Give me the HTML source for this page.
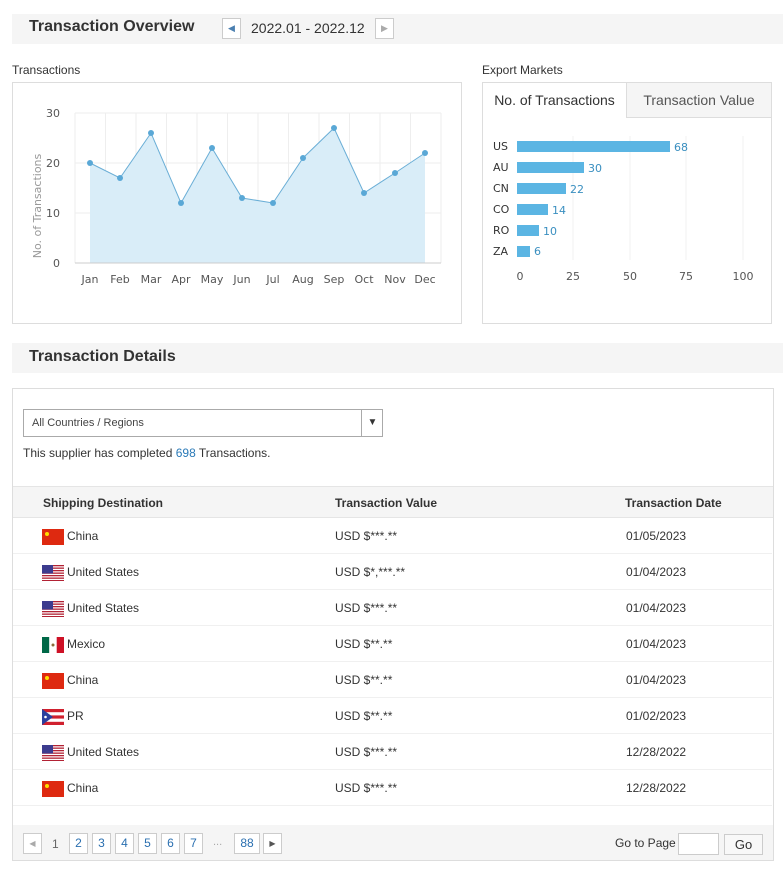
<!DOCTYPE html><html><head><meta charset="utf-8"><style>
*{margin:0;padding:0;box-sizing:border-box}
body{width:783px;height:870px;background:#fff;font-family:"Liberation Sans",sans-serif;color:#333;position:relative;overflow:hidden}
.a{position:absolute}
.bar{background:#f5f5f5}
.h{font-weight:bold;font-size:16px;color:#333}
.btn{position:absolute;border:1px solid #ccc;background:#fff;font-size:12px;color:#2a6fb0;text-align:center;line-height:19px;width:19px;height:21px}
.row{position:absolute;left:13px;width:759px;height:36px;border-bottom:1px solid #f0f0f0;font-size:12px;color:#333}
.row span{position:absolute;top:11px}
.flag{position:absolute;left:29px;top:11px;width:22px;height:16px}
</style></head><body>
<div class="a bar" style="left:12px;top:14px;width:771px;height:30px"></div>
<div class="a h" style="left:29px;top:18px">Transaction Overview</div>
<div class="btn" style="left:222px;top:18px;height:21px;color:#4a7fb0;font-size:9px">◀</div>
<div class="a" style="left:251px;top:20px;font-size:14px;color:#333">2022.01 - 2022.12</div>
<div class="btn" style="left:375px;top:18px;color:#aaa;font-size:9px">▶</div>

<div class="a" style="left:12px;top:63px;font-size:12px">Transactions</div>
<div class="a" style="left:12px;top:82px;width:450px;height:242px;border:1px solid #ddd"></div>
<svg class="a" style="left:0;top:0" width="470" height="330" font-family="DejaVu Sans,sans-serif">
<g stroke="#eee" stroke-width="1">
<line x1="75" y1="113" x2="441" y2="113"/><line x1="75" y1="163" x2="441" y2="163"/><line x1="75" y1="213" x2="441" y2="213"/>
<line x1="75" y1="113" x2="75" y2="263"/><line x1="105.5" y1="113" x2="105.5" y2="263"/><line x1="136" y1="113" x2="136" y2="263"/><line x1="166.5" y1="113" x2="166.5" y2="263"/><line x1="197" y1="113" x2="197" y2="263"/><line x1="227.5" y1="113" x2="227.5" y2="263"/><line x1="258" y1="113" x2="258" y2="263"/><line x1="288.5" y1="113" x2="288.5" y2="263"/><line x1="319" y1="113" x2="319" y2="263"/><line x1="349.5" y1="113" x2="349.5" y2="263"/><line x1="380" y1="113" x2="380" y2="263"/><line x1="410.5" y1="113" x2="410.5" y2="263"/><line x1="441" y1="113" x2="441" y2="263"/>
</g>
<polygon fill="#d9edf8" points="90,263 90,163 120,178 151,133 181,203 212,148 242,198 273,203 303,158 334,128 364,193 395,173 425,153 425,263"/>
<polyline fill="none" stroke="#6aaed6" stroke-width="1" points="90,163 120,178 151,133 181,203 212,148 242,198 273,203 303,158 334,128 364,193 395,173 425,153"/>
<g fill="#5aa8d6"><circle cx="90" cy="163" r="3"/><circle cx="120" cy="178" r="3"/><circle cx="151" cy="133" r="3"/><circle cx="181" cy="203" r="3"/><circle cx="212" cy="148" r="3"/><circle cx="242" cy="198" r="3"/><circle cx="273" cy="203" r="3"/><circle cx="303" cy="158" r="3"/><circle cx="334" cy="128" r="3"/><circle cx="364" cy="193" r="3"/><circle cx="395" cy="173" r="3"/><circle cx="425" cy="153" r="3"/></g>
<line x1="75" y1="263" x2="441" y2="263" stroke="#ccc"/>
<g font-size="11" fill="#555" text-anchor="end"><text x="60" y="117">30</text><text x="60" y="167">20</text><text x="60" y="217">10</text><text x="60" y="267">0</text></g>
<text transform="translate(41,206) rotate(-90)" font-size="11" fill="#999" text-anchor="middle">No. of Transactions</text>
<g font-size="11" fill="#555" text-anchor="middle"><text x="90" y="283">Jan</text><text x="120" y="283">Feb</text><text x="151" y="283">Mar</text><text x="181" y="283">Apr</text><text x="212" y="283">May</text><text x="242" y="283">Jun</text><text x="273" y="283">Jul</text><text x="303" y="283">Aug</text><text x="334" y="283">Sep</text><text x="364" y="283">Oct</text><text x="395" y="283">Nov</text><text x="425" y="283">Dec</text></g>
</svg>

<div class="a" style="left:482px;top:63px;font-size:12px">Export Markets</div>
<div class="a" style="left:482px;top:82px;width:290px;height:242px;border:1px solid #ddd"></div>
<div class="a" style="left:626px;top:83px;width:145px;height:35px;background:#f5f5f5;border-left:1px solid #ddd;border-bottom:1px solid #ddd;font-size:14px;color:#555;text-align:center;line-height:34px">Transaction Value</div>
<div class="a" style="left:483px;top:83px;width:143px;height:35px;font-size:14px;color:#333;text-align:center;line-height:34px">No. of Transactions</div>
<svg class="a" style="left:470px;top:60px" width="313" height="270" font-family="DejaVu Sans,sans-serif">
<g stroke="#f0f0f0"><line x1="103" y1="76" x2="103" y2="200"/><line x1="160" y1="76" x2="160" y2="200"/><line x1="216" y1="76" x2="216" y2="200"/><line x1="273" y1="76" x2="273" y2="200"/></g>
<g fill="#5bb5e3"><rect x="47" y="81" width="153" height="11"/><rect x="47" y="102" width="67" height="11"/><rect x="47" y="123" width="49" height="11"/><rect x="47" y="144" width="31" height="11"/><rect x="47" y="165" width="22" height="11"/><rect x="47" y="186" width="13" height="11"/></g>
<g font-size="11" fill="#333"><text x="23" y="90">US</text><text x="23" y="111">AU</text><text x="23" y="132">CN</text><text x="23" y="153">CO</text><text x="23" y="174">RO</text><text x="23" y="195">ZA</text></g>
<g font-size="11" fill="#3a8fc0"><text x="204" y="91">68</text><text x="118" y="112">30</text><text x="100" y="133">22</text><text x="82" y="154">14</text><text x="73" y="175">10</text><text x="64" y="195">6</text></g>
<g font-size="11" fill="#555" text-anchor="middle"><text x="50" y="220">0</text><text x="103" y="220">25</text><text x="160" y="220">50</text><text x="216" y="220">75</text><text x="273" y="220">100</text></g>
</svg>

<div class="a bar" style="left:12px;top:343px;width:771px;height:30px"></div>
<div class="a h" style="left:29px;top:348px">Transaction Details</div>
<div class="a" style="left:12px;top:388px;width:762px;height:473px;border:1px solid #ddd"></div>
<div class="a" style="left:23px;top:409px;width:360px;height:28px;border:1px solid #aaa;font-size:11px;color:#444;line-height:26px;padding-left:8px">All Countries / Regions
<div class="a" style="left:337px;top:0;width:22px;height:26px;border-left:1px solid #aaa;text-align:center;font-size:10px;color:#333">▼</div></div>
<div class="a" style="left:23px;top:446px;font-size:12px">This supplier has completed <span style="color:#2a7ab8">698</span> Transactions.</div>
<div class="a" style="left:13px;top:486px;width:760px;height:32px;background:#f5f5f5;border-top:1px solid #e5e5e5;border-bottom:1px solid #e5e5e5;font-size:12px;font-weight:bold;color:#333">
<span class="a" style="left:30px;top:9px">Shipping Destination</span><span class="a" style="left:322px;top:9px">Transaction Value</span><span class="a" style="left:612px;top:9px">Transaction Date</span></div>

<div class="row" style="top:518px"><svg class="flag" viewBox="0 0 22 16"><rect width="22" height="16" fill="#de2910"/><circle cx="5" cy="5" r="2" fill="#ffde00"/></svg><span style="left:54px">China</span><span style="left:322px">USD $***.**</span><span style="left:613px">01/05/2023</span></div>
<div class="row" style="top:554px"><svg class="flag" viewBox="0 0 22 16"><rect width="22" height="16" fill="#fff"/><g fill="#b22234"><rect y="0" width="22" height="1.3"/><rect y="2.5" width="22" height="1.3"/><rect y="5" width="22" height="1.3"/><rect y="7.5" width="22" height="1.3"/><rect y="10" width="22" height="1.3"/><rect y="12.5" width="22" height="1.3"/><rect y="15" width="22" height="1"/></g><rect width="11" height="8.5" fill="#3c3b8e"/></svg><span style="left:54px">United States</span><span style="left:322px">USD $*,***.**</span><span style="left:613px">01/04/2023</span></div>
<div class="row" style="top:590px"><svg class="flag" viewBox="0 0 22 16"><rect width="22" height="16" fill="#fff"/><g fill="#b22234"><rect y="0" width="22" height="1.3"/><rect y="2.5" width="22" height="1.3"/><rect y="5" width="22" height="1.3"/><rect y="7.5" width="22" height="1.3"/><rect y="10" width="22" height="1.3"/><rect y="12.5" width="22" height="1.3"/><rect y="15" width="22" height="1"/></g><rect width="11" height="8.5" fill="#3c3b8e"/></svg><span style="left:54px">United States</span><span style="left:322px">USD $***.**</span><span style="left:613px">01/04/2023</span></div>
<div class="row" style="top:626px"><svg class="flag" viewBox="0 0 22 16"><rect width="7.3" height="16" fill="#006847"/><rect x="7.3" width="7.4" height="16" fill="#fff"/><rect x="14.7" width="7.3" height="16" fill="#ce1126"/><circle cx="11" cy="8" r="1.5" fill="#8a6d3b"/></svg><span style="left:54px">Mexico</span><span style="left:322px">USD $**.**</span><span style="left:613px">01/04/2023</span></div>
<div class="row" style="top:662px"><svg class="flag" viewBox="0 0 22 16"><rect width="22" height="16" fill="#de2910"/><circle cx="5" cy="5" r="2" fill="#ffde00"/></svg><span style="left:54px">China</span><span style="left:322px">USD $**.**</span><span style="left:613px">01/04/2023</span></div>
<div class="row" style="top:698px"><svg class="flag" viewBox="0 0 22 16"><rect width="22" height="16" fill="#fff"/><g fill="#d0202e"><rect width="22" height="3.2"/><rect y="6.4" width="22" height="3.2"/><rect y="12.8" width="22" height="3.2"/></g><polygon points="0,0 11,8 0,16" fill="#2a3f9e"/><circle cx="3.5" cy="8" r="1.3" fill="#fff"/></svg><span style="left:54px">PR</span><span style="left:322px">USD $**.**</span><span style="left:613px">01/02/2023</span></div>
<div class="row" style="top:734px"><svg class="flag" viewBox="0 0 22 16"><rect width="22" height="16" fill="#fff"/><g fill="#b22234"><rect y="0" width="22" height="1.3"/><rect y="2.5" width="22" height="1.3"/><rect y="5" width="22" height="1.3"/><rect y="7.5" width="22" height="1.3"/><rect y="10" width="22" height="1.3"/><rect y="12.5" width="22" height="1.3"/><rect y="15" width="22" height="1"/></g><rect width="11" height="8.5" fill="#3c3b8e"/></svg><span style="left:54px">United States</span><span style="left:322px">USD $***.**</span><span style="left:613px">12/28/2022</span></div>
<div class="row" style="top:770px"><svg class="flag" viewBox="0 0 22 16"><rect width="22" height="16" fill="#de2910"/><circle cx="5" cy="5" r="2" fill="#ffde00"/></svg><span style="left:54px">China</span><span style="left:322px">USD $***.**</span><span style="left:613px">12/28/2022</span></div>

<div class="a bar" style="left:13px;top:825px;width:760px;height:35px"></div>
<div class="btn" style="left:23px;top:833px;color:#aaa;font-size:8px">◀</div>
<div class="a" style="left:52px;top:837px;font-size:12px;color:#666">1</div>
<div class="btn" style="left:69px;top:833px">2</div>
<div class="btn" style="left:92px;top:833px">3</div>
<div class="btn" style="left:115px;top:833px">4</div>
<div class="btn" style="left:138px;top:833px">5</div>
<div class="btn" style="left:161px;top:833px">6</div>
<div class="btn" style="left:184px;top:833px">7</div>
<div class="a" style="left:213px;top:836px;font-size:11px;color:#aaa">...</div>
<div class="btn" style="left:234px;top:833px;width:26px">88</div>
<div class="btn" style="left:263px;top:833px;color:#555;font-size:8px">▶</div>
<div class="a" style="left:615px;top:836px;font-size:12px;color:#333">Go to Page</div>
<div class="a" style="left:678px;top:833px;width:41px;height:22px;border:1px solid #ccc;background:#fff"></div>
<div class="a" style="left:724px;top:834px;width:39px;height:21px;border:1px solid #ccc;background:#f8f8f8;font-size:13px;text-align:center;line-height:19px;color:#333">Go</div>
</body></html>
